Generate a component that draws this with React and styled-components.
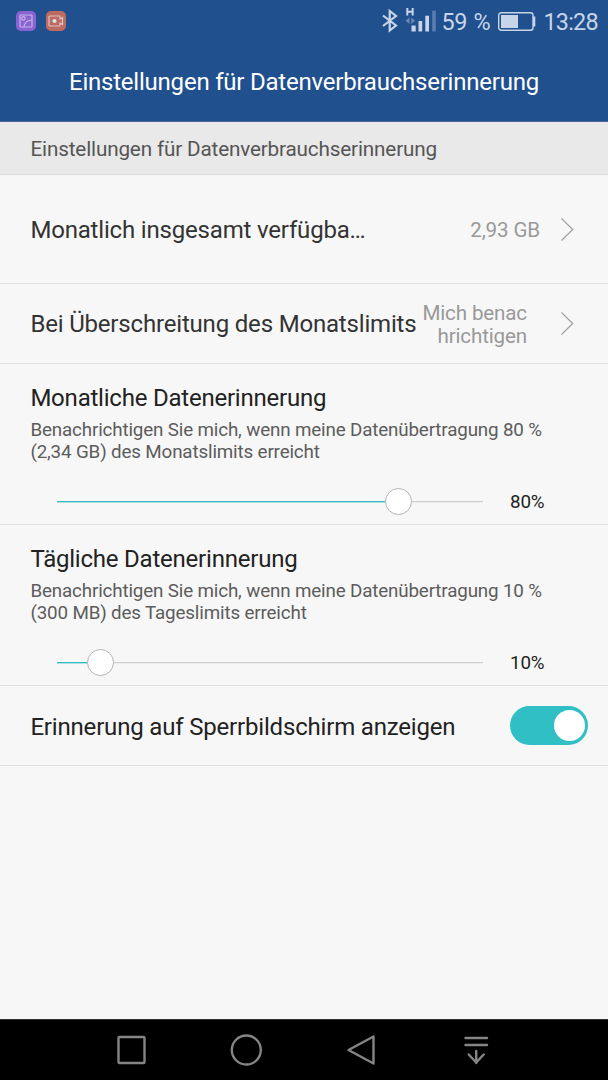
import React from 'react';
import styled, { createGlobalStyle } from 'styled-components';

const GlobalStyle = createGlobalStyle`
  * {
    box-sizing: border-box;
  }

  body {
    margin: 0;
    background-color: #f7f7f7;
    font-family: Roboto, 'Liberation Sans', sans-serif;
  }

  svg {
    display: block;
    flex-shrink: 0;
  }
`;

const Screen = styled.div`
  display: flex;
  flex-direction: column;
  width: 608px;
  height: 1080px;
  overflow: hidden;
  background-color: #f7f7f7;
`;

const StatusBar = styled.div`
  display: flex;
  align-items: center;
  height: 42px;
  padding: 0 10px 1px 15.6px;
  background-color: #20508e;
  color: #c8d5e8;
  font-size: 23.4px;
  line-height: 28px;
`;

const Notifications = styled.div`
  display: flex;
  gap: 10px;
  margin-right: auto;
`;

const StatusIcons = styled.div`
  display: flex;
  align-items: center;
  height: 40px;
`;

const Battery = styled.span`
  width: 56px;
  margin-left: 5px;
  padding-top: 2px;
  white-space: nowrap;
  letter-spacing: -0.3px;
  word-spacing: 0.8px;
`;

const Clock = styled.span`
  width: 54.5px;
  margin-left: 8px;
  padding-top: 2px;
  white-space: nowrap;
  letter-spacing: -0.8px;
`;

const Header = styled.header`
  display: flex;
  align-items: center;
  justify-content: center;
  height: 80px;
  padding-top: 1px;
  background-color: #20508e;
  border-bottom: 1px solid #4a6a97;
`;

const HeaderTitle = styled.h1`
  margin: 0;
  color: #fff;
  font-size: 24px;
  font-weight: 400;
  letter-spacing: -0.22px;
  white-space: nowrap;
`;

const Section = styled.div`
  display: flex;
  align-items: center;
  height: 53px;
  padding-top: 2px;
  padding-left: 30.5px;
  background-color: #e9e9e9;
  border-bottom: 1px solid #dcdcdc;
  color: #555;
  font-size: 20.7px;
  letter-spacing: -0.16px;
`;

const Row = styled.div`
  display: flex;
  align-items: center;
  height: ${p => p.$height}px;
  padding: ${p => p.$top || 0}px ${p => p.$right || 34}px 0 30.4px;
  border-bottom: 1px solid #e0e0e0;
`;

const RowTitle = styled.span`
  padding-top: ${p => p.$top || 0}px;
  color: ${p => p.$color || '#333'};
  font-size: 24px;
  line-height: 28px;
  letter-spacing: -0.18px;
  white-space: nowrap;
`;

const RowValue = styled.span`
  margin-left: auto;
  margin-right: ${p => p.$gap}px;
  padding-top: ${p => p.$top || 0}px;
  color: #999;
  font-size: 20.6px;
  line-height: 23px;
  letter-spacing: -0.15px;
  text-align: right;
  white-space: pre-line;
`;

const Block = styled.div`
  height: ${p => p.$height}px;
  padding: 20px 30px 0 30.4px;
  border-bottom: 1px solid #e0e0e0;
`;

const BlockTitle = styled.h2`
  margin: 0;
  color: #222;
  font-size: 24px;
  font-weight: 400;
  line-height: 28px;
  letter-spacing: -0.22px;
`;

const BlockText = styled.p`
  margin: 7px 0 0;
  color: #5c5c5c;
  font-size: 18.8px;
  line-height: 22px;
  letter-spacing: -0.15px;
  white-space: pre-line;
`;

const SliderRow = styled.div`
  display: flex;
  align-items: center;
  height: 27px;
  margin-top: 25px;
  padding-left: 26.6px;
`;

const Track = styled.div`
  display: flex;
  align-items: center;
  width: 426px;
`;

const Filled = styled.div`
  height: 1px;
  background-color: #35bbc3;
  box-shadow: 0 1px 0 #a9e0e3;
`;

const Rest = styled.div`
  flex: 1;
  height: 1px;
  background-color: #cfcfcf;
  box-shadow: 0 1px 0 #ececec;
`;

const Thumb = styled.div`
  width: 27px;
  height: 27px;
  margin: 0 -14px 0 -13px;
  border: 1px solid #b4b4b4;
  border-radius: 50%;
  background-color: #fff;
  z-index: 1;
`;

const Percent = styled.span`
  margin-left: 27px;
  color: #222;
  font-size: 18.8px;
  line-height: 22px;
  letter-spacing: -0.15px;
`;

const Switch = styled.div`
  display: flex;
  align-items: center;
  justify-content: flex-end;
  width: 78px;
  height: 39px;
  margin-left: auto;
  padding-right: 3.5px;
  border-radius: 20px;
  background-color: #31bfc6;
`;

const Knob = styled.div`
  width: 31px;
  height: 31px;
  border-radius: 50%;
  background-color: #fff;
`;

const NavBar = styled.nav`
  display: flex;
  align-items: center;
  justify-content: center;
  gap: 79px;
  height: 61px;
  margin-top: auto;
  padding-right: 1px;
  padding-bottom: 1px;
  border-top: 1px solid #333;
  background-color: #000;
`;

const GalleryIcon = () => (
  <svg width="20" height="20" viewBox="0 0 20 20" fill="none">
    <rect width="20" height="20" rx="5" fill="#8b62d2" />
    <g stroke="#c3b3e9" strokeWidth="1.2">
      <rect x="4" y="4" width="12" height="12" rx="0.8" />
      <circle cx="7.4" cy="7.4" r="1.7" />
      <path d="M7.8 16C8.5 12 11.5 9.2 16 9" />
    </g>
  </svg>
);

const RecorderIcon = () => (
  <svg width="20" height="20" viewBox="0 0 20 20" fill="none">
    <rect width="20" height="20" rx="5" fill="#bd6a60" />
    <path
      d="M4 5h9.2q0.8 0 0.8 0.8V8l2.5-1.5v7L14 12v2.2q0 0.8-0.8 0.8H4q-1 0-1-0.8V5.8Q3 5 4 5z"
      stroke="#dbc4c6"
      strokeWidth="1.2"
    />
    <circle cx="8.5" cy="10" r="2.1" fill="#dfe3ec" />
  </svg>
);

const BluetoothIcon = () => (
  <svg width="24" height="24" viewBox="0 0 24 24" fill="none">
    <path
      d="M2 6.5L15 16.5L8.7 21.5V2L15 7L2 17"
      stroke="#c8d5e8"
      strokeWidth="2.2"
    />
  </svg>
);

const SignalIcon = () => (
  <svg width="32" height="28" viewBox="0 0 32 28" fill="none">
    <path d="M2.3 1v7.500M7.700 1v7.500M2.300 4.700h5.400" stroke="#c8d5e8" strokeWidth="2" />
    <path d="M4.600 10.500v6.500L0.500 13.700zM6.200 10.500v6.500l4-3.300z" fill="#6888b3" />
    <rect x="6.500" y="18.500" width="4.200" height="6" fill="#c8d5e8" />
    <rect x="13.500" y="14" width="3.700" height="10.500" fill="#c8d5e8" />
    <rect x="20.300" y="8.700" width="3.700" height="15.800" fill="#c8d5e8" />
    <rect x="27.200" y="3.700" width="3.600" height="20.800" fill="#5b7dae" />
  </svg>
);

const BatteryIcon = () => (
  <svg width="38" height="20" viewBox="0 0 38 20" fill="none">
    <rect x="0.7" y="1.7" width="34.3" height="17.6" rx="2.5" stroke="#c8d5e8" strokeWidth="1.4" />
    <rect x="3" y="4" width="17" height="13" fill="#c8d5e8" />
    <path d="M35 5.5h2.3v10H35z" fill="#c8d5e8" />
  </svg>
);

const Chevron = () => (
  <svg width="14" height="24" viewBox="0 0 14 24" fill="none">
    <path d="M1.5 0.5L12.7 11.5L1.5 22.5" stroke="#a0a0a0" strokeWidth="1.2" />
  </svg>
);

const Slider = ({ value }) => (
  <SliderRow>
    <Track>
      <Filled style={{ width: `${value}%` }} />
      <Thumb />
      <Rest />
    </Track>
    <Percent>{value}%</Percent>
  </SliderRow>
);

const NavIcon = ({ children }) => (
  <svg
    width="36"
    height="36"
    viewBox="0 0 36 36"
    fill="none"
    stroke="#858585"
    strokeWidth="2.4"
    strokeLinecap="round"
    strokeLinejoin="round"
  >
    {children}
  </svg>
);

const App = () => {
  return (
    <>
      <GlobalStyle />
      <Screen>
        <StatusBar>
          <Notifications>
            <GalleryIcon />
            <RecorderIcon />
          </Notifications>
          <StatusIcons>
            <BluetoothIcon />
            <SignalIcon />
            <Battery>59 %</Battery>
            <BatteryIcon />
            <Clock>13:28</Clock>
          </StatusIcons>
        </StatusBar>
        <Header>
          <HeaderTitle>Einstellungen für Datenverbrauchserinnerung</HeaderTitle>
        </Header>
        <Section>Einstellungen für Datenverbrauchserinnerung</Section>
        <Row $height={109} $top={2}>
          <RowTitle>Monatlich insgesamt verfügba…</RowTitle>
          <RowValue $gap={20}>2,93 GB</RowValue>
          <Chevron />
        </Row>
        <Row $height={80}>
          <RowTitle $top={1}>Bei Überschreitung des Monatslimits</RowTitle>
          <RowValue $gap={33} $top={2}>{'Mich benac\nhrichtigen'}</RowValue>
          <Chevron />
        </Row>
        <Block $height={161}>
          <BlockTitle>Monatliche Datenerinnerung</BlockTitle>
          <BlockText>
            {'Benachrichtigen Sie mich, wenn meine Datenübertragung 80 %\n(2,34 GB) des Monatslimits erreicht'}
          </BlockText>
          <Slider value={80} />
        </Block>
        <Block $height={161}>
          <BlockTitle>Tägliche Datenerinnerung</BlockTitle>
          <BlockText>
            {'Benachrichtigen Sie mich, wenn meine Datenübertragung 10 %\n(300 MB) des Tageslimits erreicht'}
          </BlockText>
          <Slider value={10} />
        </Block>
        <Row $height={80} $right={20}>
          <RowTitle $color="#222" $top={2}>Erinnerung auf Sperrbildschirm anzeigen</RowTitle>
          <Switch>
            <Knob />
          </Switch>
        </Row>
        <NavBar>
          <NavIcon>
            <rect x="5.5" y="5" width="26" height="26" rx="1" />
          </NavIcon>
          <NavIcon>
            <circle cx="18.3" cy="18" r="14.5" />
          </NavIcon>
          <NavIcon>
            <path d="M30.500 4.500v27L5.500 18z" />
          </NavIcon>
          <NavIcon>
            <path d="M7.500 6h21.500M7.500 13h21.500M18.200 19v12M10.700 22.500l7.500 8l7.500-8" />
          </NavIcon>
        </NavBar>
      </Screen>
    </>
  );
};

export default App;
